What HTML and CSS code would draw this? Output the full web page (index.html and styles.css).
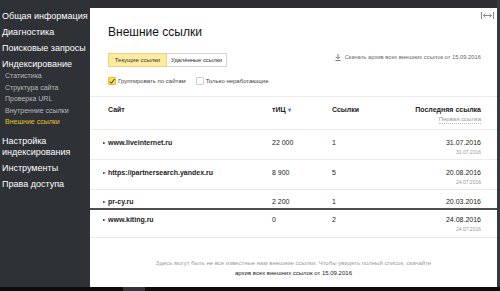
FILE: index.html
```html
<!DOCTYPE html>
<html lang="ru">
<head>
  <meta charset="UTF-8">
  <meta name="viewport" content="width=device-width, initial-scale=1.0">
  <title>Внешние ссылки</title>
  <link rel="stylesheet" href="styles.css">
</head>
<body>
  <div class="screen">
    <aside class="sidebar">
      <a class="nav-item">Общая информация</a>
      <a class="nav-item">Диагностика</a>
      <a class="nav-item">Поисковые запросы</a>
      <a class="nav-item">Индексирование</a>
      <div class="subnav">
        <a class="sub-item">Статистика</a>
        <a class="sub-item">Структура сайта</a>
        <a class="sub-item">Проверка URL</a>
        <a class="sub-item">Внутренние ссылки</a>
        <a class="sub-item active">Внешние ссылки</a>
      </div>
      <a class="nav-item two-line">Настройка<br>индексирования</a>
      <a class="nav-item">Инструменты</a>
      <a class="nav-item">Права доступа</a>
    </aside>

    <main class="panel">
      <div class="panel-head">
        <div class="expand-row">
          <svg class="expand-icon" width="13" height="7" viewBox="0 0 13 7">
            <path d="M0.5 0v7M12.5 0v7M2.5 3.5h8" stroke="#8a8a8a" stroke-width="1" fill="none"/>
            <path d="M2.5 3.5l2-2M2.5 3.5l2 2M10.5 3.5l-2-2M10.5 3.5l-2 2" stroke="#8a8a8a" stroke-width="0.9" fill="none"/>
          </svg>
        </div>
        <h1 class="title">Внешние ссылки</h1>
        <div class="controls">
          <div class="tabs">
            <span class="tab tab-active">Текущие ссылки</span>
            <span class="tab tab-removed">Удалённые ссылки</span>
          </div>
          <a class="download">
            <svg width="6" height="7" viewBox="0 0 6 7">
              <path d="M3 0v4.5M1 2.8l2 2 2-2M0.5 6.5h5" stroke="#777" stroke-width="1" fill="none"/>
            </svg>
            Скачать архив всех внешних ссылок от 15.09.2016
          </a>
        </div>
        <div class="filters">
          <label class="check"><span class="box box-on">
            <svg width="7" height="7" viewBox="0 0 7 7"><path d="M1 3.6l1.8 2L6.5 0.5" stroke="#222" stroke-width="1.1" fill="none"/></svg>
          </span>Группировать по сайтам</label>
          <label class="check"><span class="box"></span>Только неработающие</label>
        </div>
      </div>

      <div class="table">
        <div class="row row-head">
          <div class="cell">Сайт</div>
          <div class="cell">тИЦ <span class="sort">&#9662;</span></div>
          <div class="cell">Ссылки</div>
          <div class="cell cell-date">Последняя ссылка<span class="first">Первая ссылка</span></div>
        </div>
        <div class="row">
          <div class="cell site"><span class="arrow"></span>www.liveinternet.ru</div>
          <div class="cell">22 000</div>
          <div class="cell">1</div>
          <div class="cell cell-date">31.07.2016<span class="small">31.07.2016</span></div>
        </div>
        <div class="row">
          <div class="cell site"><span class="arrow"></span>https://partnersearch.yandex.ru</div>
          <div class="cell">8 900</div>
          <div class="cell">5</div>
          <div class="cell cell-date">20.08.2016<span class="small">24.07.2016</span></div>
        </div>
        <div class="row row-cut">
          <div class="cell site"><span class="arrow"></span>pr-cy.ru</div>
          <div class="cell">2 200</div>
          <div class="cell">1</div>
          <div class="cell cell-date">20.03.2016</div>
        </div>
        <div class="row row-dragged">
          <div class="cell site"><span class="arrow"></span>www.kiting.ru</div>
          <div class="cell">0</div>
          <div class="cell">2</div>
          <div class="cell cell-date">24.08.2016<span class="small">24.07.2016</span></div>
        </div>
      </div>

      <p class="note">
        Здесь могут быть не все известные нам внешние ссылки. Чтобы увидеть полный список, скачайте<br>
        <a class="note-link">архив всех внешних ссылок от 15.09.2016</a>
      </p>
    </main>

    <div class="edge"></div>
  </div>
  <div class="bottombar"><span class="bottombar-tab"></span></div>
</body>
</html>
```

FILE: styles.css
```css
body {
  font-family: "Liberation Sans", Arial, sans-serif;
  margin: 0;
  width: 500px;
  height: 291px;
  overflow: hidden;
  background: #2b2e33;
}

a {
  text-decoration: none;
}

.screen {
  display: flex;
  height: 287px;
}

.sidebar {
  width: 90px;
  flex-shrink: 0;
  padding-top: 8px;
  background: #2e3136;
  display: flex;
  flex-direction: column;
}

.nav-item {
  color: #ffffff;
  font-size: 9px;
  line-height: 16px;
  padding-left: 2px;
  white-space: nowrap;
}

.nav-item.two-line {
  line-height: 11px;
  margin-top: 8px;
  margin-bottom: 2px;
}

.subnav {
  display: flex;
  flex-direction: column;
  margin-top: -2px;
}

.sub-item {
  color: #b9bbbe;
  font-size: 7px;
  line-height: 11.5px;
  padding-left: 5px;
}

.sub-item.active {
  color: #e8c21e;
}

.panel {
  flex: 1;
  margin-top: 8px;
  background: #ffffff;
  display: flex;
  flex-direction: column;
}

.panel-head {
  padding: 4px 3px 0 18px;
}

.expand-row {
  display: flex;
  justify-content: flex-end;
  height: 7px;
}

.title {
  font-size: 12px;
  font-weight: normal;
  color: #111;
  line-height: 14px;
  margin: 6px 0 0;
}

.controls {
  display: flex;
  justify-content: space-between;
  align-items: center;
  margin-top: 14px;
  padding-right: 13px;
}

.tabs {
  display: flex;
}

.tab {
  font-size: 6px;
  color: #333;
  line-height: 12px;
  width: 59px;
  text-align: center;
  border: 1px solid #d6d6d6;
  border-left: none;
  white-space: nowrap;
}

.tab-active {
  background: #ffeba0;
  border: 1px solid #ebd381;
  width: 57px;
}

.tab-removed {
  letter-spacing: -0.1px;
}

.download {
  font-size: 5.8px;
  color: #666;
  display: flex;
  align-items: center;
  gap: 4px;
  white-space: nowrap;
  margin-top: -6px;
}

.filters {
  display: flex;
  gap: 10px;
  margin-top: 10px;
}

.check {
  display: flex;
  align-items: center;
  gap: 2px;
  font-size: 6px;
  color: #444;
  line-height: 8px;
}

.box {
  width: 6px;
  height: 6px;
  border: 1px solid #cfcfcf;
  border-radius: 1px;
  display: flex;
  align-items: center;
  justify-content: center;
}

.box-on {
  background: #ffdb4d;
  border-color: #e0bf3b;
}

.table {
  margin-top: 11px;
  border-top: 1px solid #ebebeb;
}

.row {
  display: grid;
  grid-template-columns: 164px 60px 1fr 110px;
  height: 30px;
  box-sizing: border-box;
  padding: 8px 16px 0 18px;
  border-bottom: 1px solid #ebebeb;
  font-size: 7px;
  color: #222;
  line-height: 10px;
}

.row-head {
  height: 33px;
  padding-top: 8px;
  font-weight: bold;
}

.row-cut {
  height: 18px;
  padding-top: 7px;
  overflow: hidden;
  border-bottom: none;
}

.row-dragged {
  height: 30px;
  border-top: 2px solid #4d4f52;
  padding-top: 5px;
}

.cell-date {
  text-align: right;
  display: flex;
  flex-direction: column;
  align-items: flex-end;
}

.first {
  font-weight: normal;
  font-size: 6px;
  color: #999;
  line-height: 8px;
  border-bottom: 1px dotted #bbb;
}

.small {
  font-size: 5px;
  color: #999;
  line-height: 8px;
}

.sort {
  color: #3b7ddd;
  font-size: 6px;
}

.site {
  font-weight: bold;
  position: relative;
}

.arrow {
  position: absolute;
  left: -5px;
  top: 3.5px;
  border-left: 3px solid #333;
  border-top: 1.5px solid transparent;
  border-bottom: 1.5px solid transparent;
}

.note {
  margin: 20px 0 0;
  text-align: center;
  font-size: 6px;
  line-height: 10px;
  color: #9a9a9a;
}

.note-link {
  color: #222;
}

.edge {
  width: 3px;
  background: #35383c;
}

.bottombar {
  height: 4px;
  background: #0c0c0c;
}

.bottombar-tab {
  display: block;
  width: 22px;
  height: 4px;
  margin-left: 123px;
  background: #333538;
}
```
